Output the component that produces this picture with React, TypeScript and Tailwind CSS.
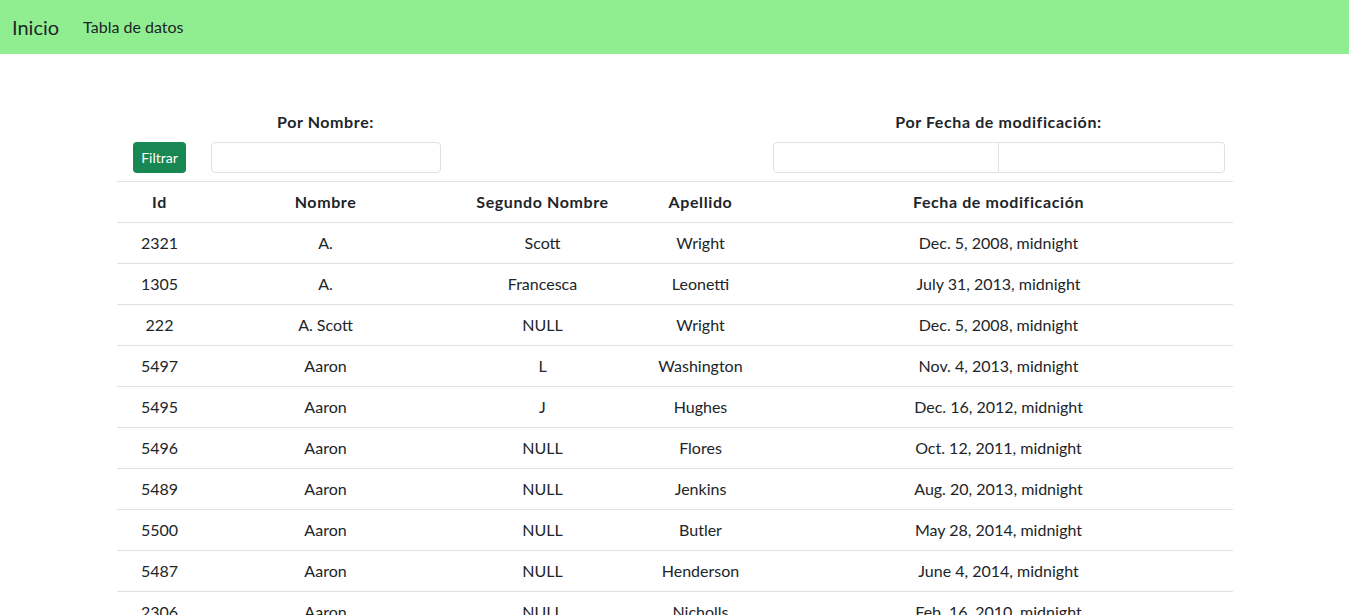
import React from 'react';

interface Row {
  id: number;
  nombre: string;
  segundo: string;
  apellido: string;
  fecha: string;
}

const rows: Row[] = [
  { id: 2321, nombre: 'A.', segundo: 'Scott', apellido: 'Wright', fecha: 'Dec. 5, 2008, midnight' },
  { id: 1305, nombre: 'A.', segundo: 'Francesca', apellido: 'Leonetti', fecha: 'July 31, 2013, midnight' },
  { id: 222, nombre: 'A. Scott', segundo: 'NULL', apellido: 'Wright', fecha: 'Dec. 5, 2008, midnight' },
  { id: 5497, nombre: 'Aaron', segundo: 'L', apellido: 'Washington', fecha: 'Nov. 4, 2013, midnight' },
  { id: 5495, nombre: 'Aaron', segundo: 'J', apellido: 'Hughes', fecha: 'Dec. 16, 2012, midnight' },
  { id: 5496, nombre: 'Aaron', segundo: 'NULL', apellido: 'Flores', fecha: 'Oct. 12, 2011, midnight' },
  { id: 5489, nombre: 'Aaron', segundo: 'NULL', apellido: 'Jenkins', fecha: 'Aug. 20, 2013, midnight' },
  { id: 5500, nombre: 'Aaron', segundo: 'NULL', apellido: 'Butler', fecha: 'May 28, 2014, midnight' },
  { id: 5487, nombre: 'Aaron', segundo: 'NULL', apellido: 'Henderson', fecha: 'June 4, 2014, midnight' },
  { id: 2306, nombre: 'Aaron', segundo: 'NULL', apellido: 'Nicholls', fecha: 'Feb. 16, 2010, midnight' },
];

const cell = 'px-2 py-2 border-b border-[#dee2e6] text-center';

export default function App() {
  return (
    <div className="min-h-screen bg-white text-[#212529] text-base leading-6 font-['Segoe_UI','Lato',sans-serif]">
      <nav className="h-[54px] bg-[#90ee90] flex items-center px-3">
        <a className="text-xl leading-[30px] mr-4">Inicio</a>
        <a className="px-2">Tabla de datos</a>
      </nav>

      <div className="max-w-[1140px] mx-auto px-3 mt-12">
        <table className="w-full table-fixed border-collapse">
          <colgroup>
            <col className="w-[86px]" />
            <col className="w-[246px]" />
            <col className="w-[188px]" />
            <col className="w-[128px]" />
            <col />
          </colgroup>
          <thead>
            <tr>
              <td className={`${cell} align-bottom`}>
                <button className="h-[31px] px-2 rounded bg-[#198754] text-white text-sm">Filtrar</button>
              </td>
              <td className={cell}>
                <label className="block font-bold tracking-[0.6px] mb-2">Por Nombre:</label>
                <input className="block w-full h-[31px] rounded border border-[#dee2e6] px-2 text-sm" />
              </td>
              <td className={cell}></td>
              <td className={cell}></td>
              <td className={cell}>
                <label className="block font-bold tracking-[0.6px] mb-2">Por Fecha de modificación:</label>
                <div className="flex h-[31px]">
                  <input className="w-1/2 min-w-0 rounded-l border border-[#dee2e6] px-2 text-sm" />
                  <input className="w-1/2 min-w-0 rounded-r border border-l-0 border-[#dee2e6] px-2 text-sm" />
                </div>
              </td>
            </tr>
            <tr className="font-bold tracking-[0.6px]">
              <th className={cell}>Id</th>
              <th className={cell}>Nombre</th>
              <th className={cell}>Segundo Nombre</th>
              <th className={cell}>Apellido</th>
              <th className={cell}>Fecha de modificación</th>
            </tr>
          </thead>
          <tbody>
            {rows.map(r => (
              <tr key={r.id}>
                <td className={cell}>{r.id}</td>
                <td className={cell}>{r.nombre}</td>
                <td className={cell}>{r.segundo}</td>
                <td className={cell}>{r.apellido}</td>
                <td className={cell}>{r.fecha}</td>
              </tr>
            ))}
          </tbody>
        </table>
      </div>
    </div>
  );
}
